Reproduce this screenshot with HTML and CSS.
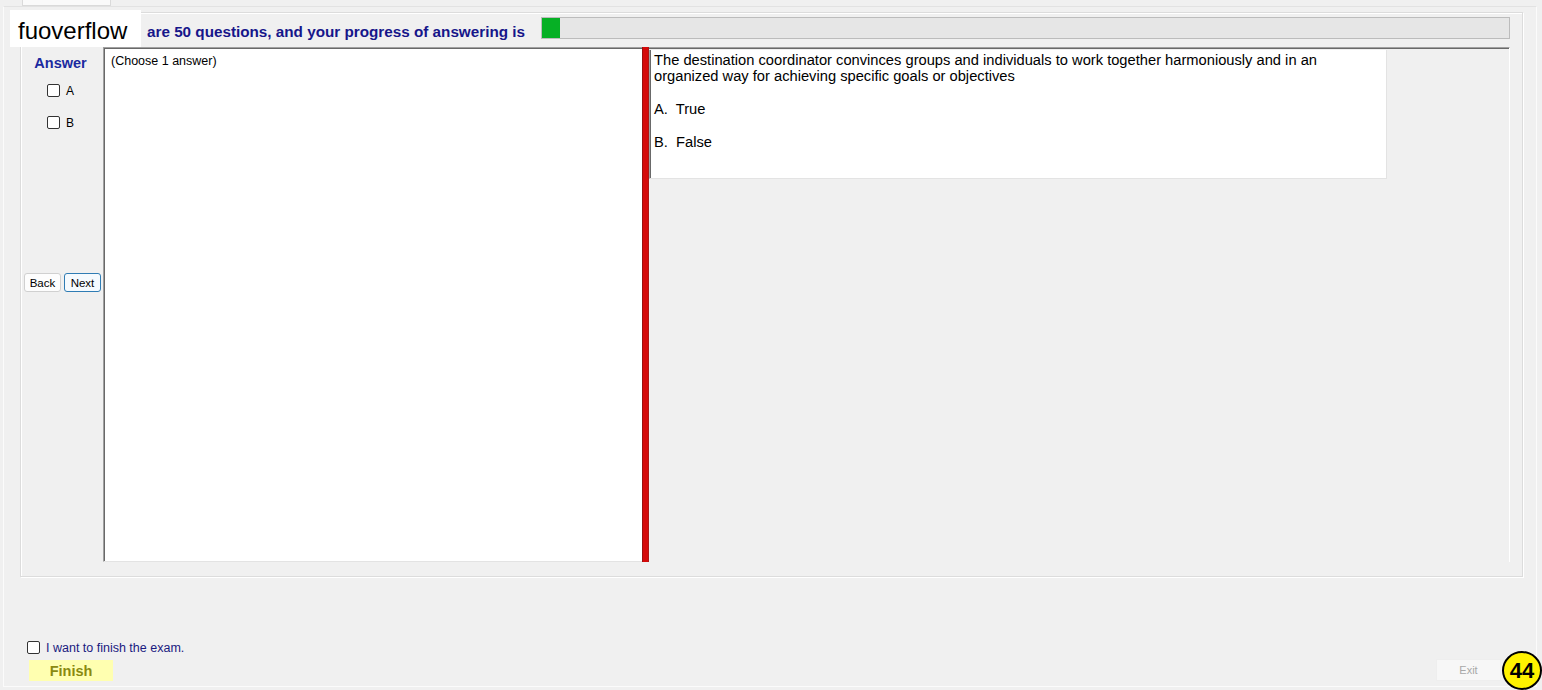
FILE: index.html
```html
<!DOCTYPE html>
<html lang="en">
<head>
  <meta charset="UTF-8">
  <title>Exam</title>
  <link rel="stylesheet" href="styles.css">
</head>
<body>
  <div class="tabstrip">
    <div class="tab"></div>
  </div>

  <div class="page">
    <div class="group">
      <div class="header">
        <span class="progress-text">are 50 questions, and your progress of answering is</span>
        <div class="progress">
          <div class="progress-fill" style="width: 18px"></div>
        </div>
      </div>

      <div class="main">
        <div class="answer-col">
          <div class="answer-title">Answer</div>
          <label class="choice choice-a"><input type="checkbox"> A</label>
          <label class="choice choice-b"><input type="checkbox"> B</label>
          <div class="nav-buttons">
            <button type="button" class="btn">Back</button>
            <button type="button" class="btn btn-focus">Next</button>
          </div>
        </div>

        <div class="answer-box">(Choose 1 answer)</div>

        <div class="splitter"></div>

        <div class="question-panel">
          <div class="question-box">
            <p class="question">The destination coordinator convinces groups and individuals to work together harmoniously and in an organized way for achieving specific goals or objectives</p>
            <p class="option">A.&nbsp; True</p>
            <p class="option">B.&nbsp; False</p>
          </div>
        </div>
      </div>
    </div>

    <div class="footer">
      <div class="finish-area">
        <label class="finish-check"><input type="checkbox"> I want to finish the exam.</label>
        <button type="button" class="finish-btn">Finish</button>
      </div>
      <button type="button" class="exit-btn">Exit</button>
    </div>
  </div>

  <div class="watermark">fuoverflow</div>
  <div class="badge">44</div>
</body>
</html>
```

FILE: styles.css
```css
body {
  margin: 0;
  width: 1542px;
  height: 690px;
  overflow: hidden;
  background-color: #f0f0f0;
  font-family: "Liberation Sans", Arial, sans-serif;
  color: #000;
  position: relative;
}

.tabstrip {
  height: 6px;
}

.tab {
  margin-left: 22px;
  width: 87px;
  height: 5px;
  background: #fafafa;
  border: 1px solid #dadada;
  border-top: none;
}

.page {
  margin-left: 3px;
  width: 1534px;
  height: 681px;
  border: 1px solid #fbfbfb;
  border-top-color: #e2e2e2;
  display: flex;
  flex-direction: column;
  box-sizing: border-box;
  padding-top: 5px;
}

.group {
  margin-left: 16px;
  width: 1503px;
  height: 565px;
  border: 1px solid #dcdcdc;
  box-shadow: inset 1px 1px 0 #fff, 1px 1px 0 #fff;
  box-sizing: border-box;
  display: flex;
  flex-direction: column;
}

/* progress line */
.header {
  display: flex;
  align-items: flex-start;
  padding: 4px 12px 7px 0;
}

.progress-text {
  margin-left: 126px;
  margin-top: 6px;
  font-size: 15.25px;
  font-weight: bold;
  color: #16168a;
  white-space: nowrap;
}

.progress {
  flex: 1;
  margin-left: 16px;
  height: 22px;
  background: #e6e6e6;
  border: 1px solid #bcbcbc;
  box-sizing: border-box;
}

.progress-fill {
  height: 100%;
  background: #06b025;
}

.main {
  display: flex;
  height: 515px;
}

/* left column */
.answer-col {
  width: 82px;
  display: flex;
  flex-direction: column;
  padding-top: 8px;
  box-sizing: border-box;
}

.answer-title {
  text-align: center;
  font-size: 14.5px;
  font-weight: bold;
  color: #1b2aa0;
  line-height: 17px;
  padding-right: 3px;
}

.choice {
  display: flex;
  align-items: center;
  margin-left: 26px;
  font-size: 12px;
  height: 13px;
  gap: 6px;
}

.choice-a {
  margin-top: 12px;
}

.choice-b {
  margin-top: 19px;
}

input[type="checkbox"] {
  appearance: none;
  margin: 0;
  width: 13px;
  height: 13px;
  border: 1px solid #333;
  border-radius: 2px;
  background: #fff;
  box-sizing: border-box;
}

.nav-buttons {
  display: flex;
  gap: 3px;
  margin-top: 144px;
  padding-left: 3px;
}

.btn {
  width: 37px;
  height: 19px;
  padding: 0;
  font-family: "Liberation Sans", Arial, sans-serif;
  font-size: 11.5px;
  background: #fdfdfd;
  border: 1px solid #d0d0d0;
  border-radius: 3px;
  color: #000;
}

.btn-focus {
  border-color: #2f7cb4;
  background: #f5fafe;
}

/* answer text box */
.answer-box {
  width: 539px;
  height: 515px;
  background: #fff;
  border-top: 1px solid #a0a0a0;
  border-left: 1px solid #a0a0a0;
  border-bottom: 1px solid #e3e3e3;
  box-shadow: inset 1px 1px 0 #696969;
  box-sizing: border-box;
  padding: 6px 0 0 7px;
  font-size: 12.5px;
}

.splitter {
  width: 7px;
  height: 515px;
  background: #d50a0a;
  border-left: 1px solid #9a1010;
  border-right: 1px solid #b01515;
  box-sizing: border-box;
}

/* question side */
.question-panel {
  width: 861px;
  height: 515px;
  border-top: 1px solid #a0a0a0;
  border-right: 1px solid #fff;
  box-shadow: inset 0 1px 0 #696969;
  box-sizing: border-box;
  padding-top: 2px;
}

.question-box {
  width: 738px;
  height: 129px;
  background: #fff;
  border-left: 1px solid #a0a0a0;
  border-right: 1px solid #e3e3e3;
  border-bottom: 1px solid #e3e3e3;
  box-shadow: inset 1px 0 0 #696969;
  box-sizing: border-box;
  padding: 2px 16px 0 4px;
  font-size: 14.7px;
  line-height: 16px;
}

.question-box p {
  margin: 0;
}

.option {
  margin-top: 17px !important;
}

/* bottom */
.footer {
  flex: 1;
  display: flex;
  justify-content: space-between;
  align-items: flex-end;
  padding: 0 35px 5px 23px;
}

.finish-area {
  display: flex;
  flex-direction: column;
}

.finish-check {
  display: flex;
  align-items: center;
  gap: 6px;
  font-size: 12.5px;
  color: #1a1a80;
  height: 13px;
}

.finish-btn {
  margin-top: 6px;
  margin-left: 2px;
  width: 84px;
  height: 21px;
  padding: 0;
  border: none;
  background: #ffffb0;
  color: #8a8a10;
  font-family: "Liberation Sans", Arial, sans-serif;
  font-size: 14.5px;
  font-weight: bold;
}

.exit-btn {
  width: 65px;
  height: 22px;
  padding: 0;
  background: #f7f7f7;
  border: 1px solid #eeeeee;
  color: #a8a8a8;
  font-family: "Liberation Sans", Arial, sans-serif;
  font-size: 11px;
  margin-bottom: 0;
}

/* overlays */
.watermark {
  position: absolute;
  left: 10px;
  top: 10px;
  width: 131px;
  height: 37px;
  background: #fff;
  box-sizing: border-box;
  padding-left: 8px;
  font-size: 24px;
  line-height: 41px;
}

.badge {
  position: absolute;
  right: 0;
  bottom: 0;
  width: 40px;
  height: 39px;
  border: 2px solid #000;
  border-radius: 50%;
  background: #fff200;
  box-sizing: border-box;
  display: flex;
  align-items: center;
  justify-content: center;
  font-size: 22px;
  font-weight: bold;
}
```
